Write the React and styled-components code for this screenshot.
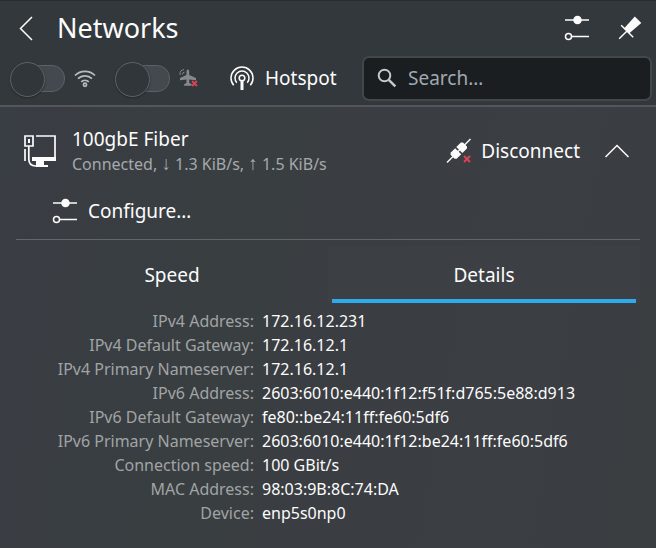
import React, { useState } from "react";
import styled, { createGlobalStyle } from "styled-components";

const GlobalStyle = createGlobalStyle`
  * { box-sizing: border-box; }
  body {
    margin: 0;
    background: #3a3e43;
    color: #fcfcfc;
    font-family: "Noto Sans", sans-serif;
    font-size: 19px;
    line-height: 28px;
  }
  button, input { font: inherit; color: inherit; }
`;

const Applet = styled.main`
  min-height: 100vh;
  background: linear-gradient(100deg, #393d44 0%, #393e41 35%, #3b3e43 75%, #3a3e41 100%);
`;

const Header = styled.header`
  background: #33383d;
  border-top: 1px solid #292d33;
  border-bottom: 2px solid #53575b;
`;

const TitleRow = styled.div`
  display: flex;
  align-items: center;
  height: 54px;
  padding: 0 14px 0 18px;
`;

const Title = styled.h1`
  flex: 1;
  margin: 0 0 0 23px;
  font-size: 27px;
  font-weight: 400;
  line-height: 36px;
`;

const PlainButton = styled.button`
  display: flex;
  align-items: center;
  gap: ${(p) => p.$gap || 0}px;
  padding: 0;
  border: 0;
  background: none;
  white-space: nowrap;
  cursor: pointer;
`;

const HeaderActions = styled.div`
  display: flex;
  gap: 28px;
`;

const ToolRow = styled.div`
  display: flex;
  align-items: center;
  height: 50px;
  padding: 0 4px 4px 10px;
`;

const SwitchLabel = styled.label`
  display: flex;
  align-items: center;
  gap: 9px;
  margin-right: ${(p) => p.$after}px;
`;

const Switch = styled.input`
  appearance: none;
  position: relative;
  display: flex;
  align-items: center;
  width: 55px;
  height: 33px;
  margin: 0;

  &::before {
    content: "";
    flex: 1;
    height: 25px;
    margin-left: 4px;
    border: 1px solid #5d6165;
    border-radius: 13px;
    background: #444950;
  }

  &::after {
    content: "";
    position: absolute;
    top: 0;
    left: ${(p) => (p.checked ? 22 : 0)}px;
    width: 33px;
    height: 33px;
    border: 1px solid #606467;
    border-radius: 50%;
    background: #31363a;
    box-shadow: 0 1px 2px #25292d;
  }
`;

const SearchBox = styled.label`
  flex: 1;
  display: flex;
  align-items: center;
  gap: 11px;
  min-width: 0;
  height: 45px;
  margin-left: 24px;
  padding: 0 13px;
  border: 2px solid #42474a;
  border-radius: 7px;
  background: #1b1e20;
`;

const SearchInput = styled.input`
  flex: 1;
  min-width: 0;
  padding: 0;
  border: 0;
  outline: 0;
  background: none;
  &::placeholder { color: #a1a9b1; opacity: 1; }
`;

const ToolLabel = styled.span`
  min-width: 73px;
  text-align: left;
`;

const Content = styled.section`
  padding: 18px 16px;
`;

const Connection = styled.div`
  display: flex;
  align-items: center;
  padding: 0 10px 0 7px;
`;

const ConnectionText = styled.div`
  flex: 1;
  min-width: 0;
  margin-left: 16px;
`;

const Name = styled.h2`
  margin: 0;
  font-size: 19px;
  font-weight: 400;
  line-height: 28px;
`;

const Status = styled.p`
  margin: 0;
  color: #a6a9ab;
  font-size: 16px;
  line-height: 23px;
`;

const Arrow = styled.span`
  font-family: "Liberation Sans", sans-serif;
  font-size: 19px;
  line-height: 16px;
`;

const ConnectionActions = styled.div`
  display: flex;
  gap: 24px;
`;

const ConfigureRow = styled.div`
  display: flex;
  align-items: center;
  height: 64px;
  padding: 6px 0 0 36px;
  border-bottom: 1px solid #62666a;
`;

const TabBar = styled.div`
  display: grid;
  grid-template-columns: 1fr 1fr;
  padding-top: 6px;
`;

const Tab = styled.button`
  height: 57px;
  padding: 0;
  border: 0;
  background: ${(p) => (p["aria-selected"] ? "linear-gradient(#2eabea, #2eabea) 4px 100% / calc(100% - 8px) 4px no-repeat, #3c3f43" : "none")};
  cursor: pointer;
`;

const Details = styled.table`
  margin-top: 6px;
  border-collapse: collapse;
  font-size: 16px;
  line-height: 24px;

  th, td { padding: 0; white-space: nowrap; }
  th {
    width: 238px;
    color: #a1a4a5;
    font-weight: 400;
    text-align: right;
  }
  td { padding-left: 8px; }
`;

const Line = styled.svg.attrs({ fill: "none", stroke: "currentColor", "aria-hidden": true })`
  display: block;
  flex: none;
`;

const BackIcon = () => (
  <Line width="16" height="26" strokeWidth="1.5"><path d="M14 2 2.5 13.5 14 25" /></Line>
);

const ChevronUp = () => (
  <Line width="26" height="16" strokeWidth="1.5"><path d="M1.5 14 13 2.5 24.5 14" /></Line>
);

const SlidersIcon = () => (
  <Line width="26" height="26" strokeWidth="1.5">
    <path d="M1 5h24M8 21.5h17" />
    <circle cx="13.5" cy="5" r="3.5" fill="currentColor" />
    <circle cx="4.5" cy="21.5" r="3" />
  </Line>
);

const PinIcon = () => (
  <Line width="24" height="24" strokeWidth="1.5">
    <path d="M1.2 22.8 9 15M3.2 9.2l12 12" />
    <path stroke="none" d="m16.8.5 6.5 6.5L11 17.5 6 12.5Z" fill="currentColor" />
  </Line>
);

const WifiIcon = () => (
  <Line width="22" height="20" strokeWidth="1.7" color="#b8bbbd">
    <path d="M1 7.5a14.2 14.2 0 0 1 20 0" />
    <path d="M4 10.7a10 10 0 0 1 14 0M7.2 13.8a5.5 5.5 0 0 1 7.6 0" />
    <circle cx="11" cy="16.8" r="1.6" />
  </Line>
);

const AirplaneIcon = () => (
  <Line width="20" height="20">
    <path stroke="none" fill="#85898c" d="M7.5 3Q8.8-.5 10.2 3V7l6.8 3v2.2l-6.8-.8v3.4l2.8 1.7v1.2H5v-1.2l2.5-1.7v-3.4L1 12.2V10l6.5-3Z" />
    <path stroke="#85898c" d="M1 7Q.7 1.7 5 1.7M3.5 6.5q0-2.3 2-2.3" />
    <path stroke="#33383d" strokeWidth="3" d="m13 13 5.5 5.5m0-5.5L13 18.5" />
    <path stroke="#da4453" strokeWidth="1.8" d="m13 13 5 5m0-5-5 5" />
  </Line>
);

const HotspotIcon = () => (
  <Line width="26" height="26" strokeWidth="1.5">
    <path d="M4.7 20.3a11 11 0 1 1 16.6 0" />
    <path d="M7.8 17.8a7 7 0 1 1 10.4 0" />
    <circle cx="13" cy="13" r="2.8" />
    <path strokeWidth="3" d="M13 15v10" />
  </Line>
);

const SearchIcon = () => (
  <Line width="20" height="20" strokeWidth="2" color="#c6c8c9">
    <circle cx="7.5" cy="7.5" r="5.8" />
    <path strokeWidth="2.5" d="m11.8 11.8 6.5 6.5" />
  </Line>
);

const WiredIcon = () => (
  <Line width="33" height="34" strokeWidth="1.7">
    <path d="M13 2h19v22" />
    <path stroke="none" fill="currentColor" d="M9 23h24v4H21v4h4v2h-12v-6H9z" />
    <path d="M2 2h8v10H2zM5.8 12v13q0 7 7 7H17M2 15v12" />
    <path strokeWidth="2" d="M6 5v4" />
  </Line>
);

const DisconnectIcon = () => (
  <Line width="26" height="26" strokeWidth="1.5">
    <path d="M1 24.5 24.5 1" />
    <g transform="rotate(-45 12.7 12.7)" stroke="none" fill="currentColor">
      <path d="M12 8.4v8.6H5.5L4 15.5V9.9l1.5-1.5zM13.6 8.4v8.6h6.5l1.5-1.5V9.9l-1.5-1.5z" />
    </g>
    <path stroke="#da4453" strokeWidth="2" d="m18 18 6 6m0-6-6 6" />
  </Line>
);

const details = [
  ["IPv4 Address:", "172.16.12.231"],
  ["IPv4 Default Gateway:", "172.16.12.1"],
  ["IPv4 Primary Nameserver:", "172.16.12.1"],
  ["IPv6 Address:", "2603:6010:e440:1f12:f51f:d765:5e88:d913"],
  ["IPv6 Default Gateway:", "fe80::be24:11ff:fe60:5df6"],
  ["IPv6 Primary Nameserver:", "2603:6010:e440:1f12:be24:11ff:fe60:5df6"],
  ["Connection speed:", "100 GBit/s"],
  ["MAC Address:", "98:03:9B:8C:74:DA"],
  ["Device:", "enp5s0np0"],
];

export default function App() {
  const [wifi, setWifi] = useState(false);
  const [airplane, setAirplane] = useState(false);
  const [tab, setTab] = useState("Details");

  return (
    <Applet>
      <GlobalStyle />
      <Header>
        <TitleRow>
          <PlainButton aria-label="Back"><BackIcon /></PlainButton>
          <Title>Networks</Title>
          <HeaderActions>
            <PlainButton aria-label="Configure network connections"><SlidersIcon /></PlainButton>
            <PlainButton aria-label="Keep open"><PinIcon /></PlainButton>
          </HeaderActions>
        </TitleRow>
        <ToolRow>
          <SwitchLabel $after={19}>
            <Switch type="checkbox" role="switch" aria-label="Wi-Fi" checked={wifi} onChange={(e) => setWifi(e.target.checked)} />
            <WifiIcon />
          </SwitchLabel>
          <SwitchLabel $after={30}>
            <Switch type="checkbox" role="switch" aria-label="Airplane mode" checked={airplane} onChange={(e) => setAirplane(e.target.checked)} />
            <AirplaneIcon />
          </SwitchLabel>
          <PlainButton $gap={10}><HotspotIcon /><ToolLabel>Hotspot</ToolLabel></PlainButton>
          <SearchBox>
            <SearchIcon />
            <SearchInput type="text" aria-label="Search" placeholder="Search…" />
          </SearchBox>
        </ToolRow>
      </Header>
      <Content>
        <Connection>
          <WiredIcon />
          <ConnectionText>
            <Name>100gbE Fiber</Name>
            <Status>Connected, <Arrow>↓</Arrow> 1.3 KiB/s, <Arrow>↑</Arrow> 1.5 KiB/s</Status>
          </ConnectionText>
          <ConnectionActions>
            <PlainButton $gap={9}><DisconnectIcon />Disconnect</PlainButton>
            <PlainButton aria-label="Collapse" aria-expanded="true"><ChevronUp /></PlainButton>
          </ConnectionActions>
        </Connection>
        <ConfigureRow>
          <PlainButton $gap={10}><SlidersIcon />Configure…</PlainButton>
        </ConfigureRow>
        <TabBar role="tablist">
          {["Speed", "Details"].map((name) => (
            <Tab key={name} role="tab" aria-selected={tab === name} onClick={() => setTab(name)}>{name}</Tab>
          ))}
        </TabBar>
        <Details>
          <tbody>
            {details.map(([label, value]) => (
              <tr key={label}>
                <th scope="row">{label}</th>
                <td>{value}</td>
              </tr>
            ))}
          </tbody>
        </Details>
      </Content>
    </Applet>
  );
}
